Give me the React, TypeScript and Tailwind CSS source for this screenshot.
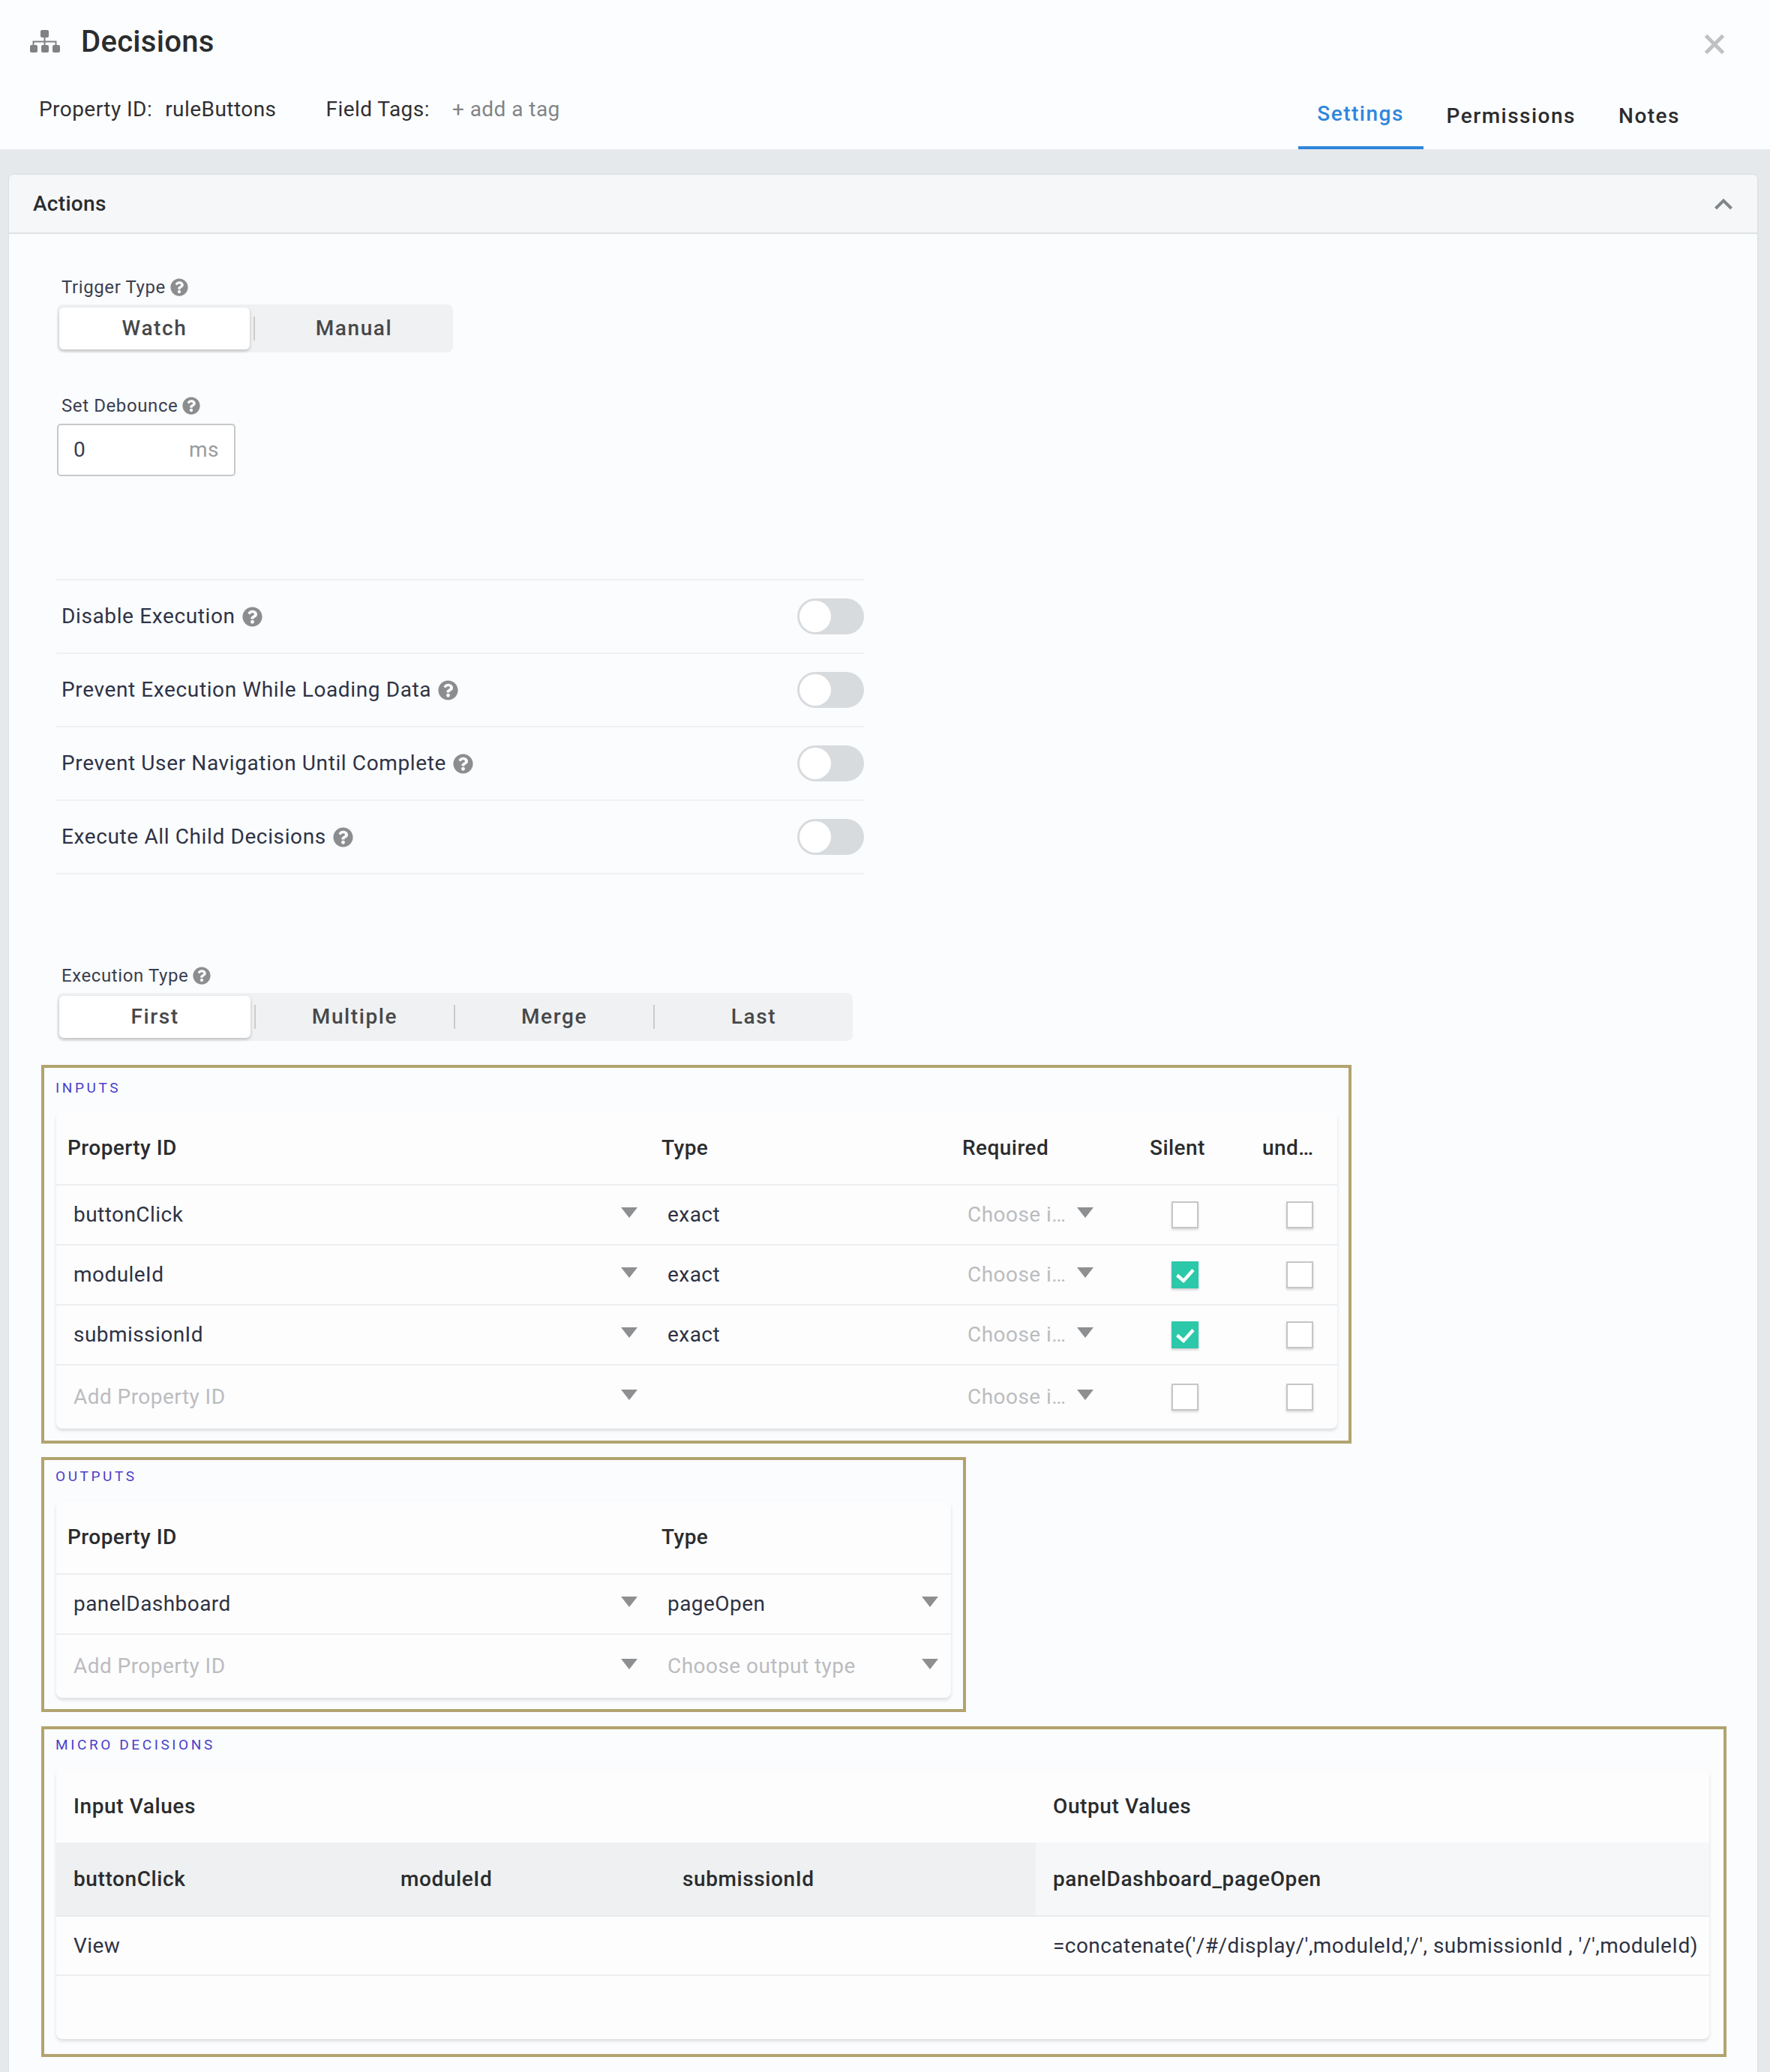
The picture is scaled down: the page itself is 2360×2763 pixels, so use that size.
import { FaQuestionCircle } from 'react-icons/fa';

const font = { fontFamily: 'Roboto, "Liberation Sans", sans-serif' };

function Help({ size = 24 }: { size?: number }) {
  return <FaQuestionCircle size={size} color="#8c8d8f" className="shrink-0" />;
}

function Caret() {
  return (
    <svg width="22" height="14" viewBox="0 0 22 14" className="shrink-0 -mt-[6px]">
      <polygon points="0,0 22,0 11,14" fill="#8e8f91" />
    </svg>
  );
}

function Segmented({ items, width }: { items: string[]; width: string }) {
  return (
    <div className={`ml-[21px] flex h-[64px] items-center rounded-[8px] bg-[#eff1f2] pl-[3px] text-[28px] font-medium tracking-[1.6px] text-[#47484a] ${width}`}>
      <div className="flex h-[56px] w-[256px] items-center justify-center rounded-[6px] bg-white shadow-[0_2px_4px_rgba(0,0,0,0.22)]">
        {items[0]}
      </div>
      <div className="ml-[5px] h-[32px] w-[2px] bg-[#c9cbcd]" />
      {items.slice(1).map((item, i) => (
        <div key={item} className="flex items-center">
          {i > 0 && <div className="h-[32px] w-[2px] bg-[#c9cbcd]" />}
          <div className="flex w-[264px] items-center justify-center">{item}</div>
        </div>
      ))}
    </div>
  );
}

function FieldLabel({ text }: { text: string }) {
  return (
    <div className="ml-[27px] flex h-[36px] items-center gap-[6px] text-[24px] tracking-[0.6px] text-[#3a3e50]">
      {text}
      <Help />
    </div>
  );
}

function ToggleRow({ label }: { label: string }) {
  return (
    <div className="flex h-[98px] items-center justify-between border-b-2 border-[#eff1f3]">
      <div className="ml-[7px] flex items-center gap-[9px] text-[28px] tracking-[0.62px] text-[#2f3346]">
        {label}
        <Help size={27} />
      </div>
      <div className="flex h-[48px] w-[89px] items-center rounded-full bg-[#d8dbde] pl-[3px]">
        <div className="h-[42px] w-[42px] rounded-full bg-white" />
      </div>
    </div>
  );
}

function Checkbox({ checked, offset }: { checked?: boolean; offset: string }) {
  if (checked) {
    return (
      <div className={`h-[36px] w-[36px] bg-[#2bc8a9] shadow-[0_2px_3px_rgba(0,0,0,0.2)] ${offset}`}>
        <svg width="36" height="36" viewBox="0 0 36 36" fill="none">
          <path d="M7.5 18.5 L16 26 L29 11.5" stroke="white" strokeWidth="4.4" />
        </svg>
      </div>
    );
  }
  return <div className={`h-[36px] w-[36px] border-2 border-[#c4c6c8] bg-white shadow-[0_2px_3px_rgba(0,0,0,0.15)] ${offset}`} />;
}

const inputRows = [
  { id: 'buttonClick', type: 'exact', silent: false },
  { id: 'moduleId', type: 'exact', silent: true },
  { id: 'submissionId', type: 'exact', silent: true },
];

function InputCells({ id, type, silent, placeholder }: { id: string; type: string; silent: boolean; placeholder?: boolean }) {
  return (
    <>
      <div className={`flex items-center justify-between pl-[23px] pr-[17px] ${placeholder ? 'text-[#bbbcbe]' : ''}`}>
        {id}
        <Caret />
      </div>
      <div className="pl-[23px]">{type}</div>
      <div className="flex items-center justify-between pl-[22px] pr-[60px] text-[#bbbcbe]">
        Choose i…
        <Caret />
      </div>
      <div className="flex items-center">
        <Checkbox checked={silent} offset="ml-[44px]" />
      </div>
      <div className="flex items-center">
        <Checkbox offset="ml-[47px]" />
      </div>
    </>
  );
}

export default function App() {
  return (
    <div style={font} className="h-[2763px] w-[2360px] overflow-hidden bg-[#e6e9ec]">
      {/* Header */}
      <div className="flex h-[199px] flex-col bg-[#fcfdfe]">
        <div className="flex h-[112px] items-center pl-[40px] pr-[60px]">
          <svg width="40" height="30" viewBox="0 0 40 30" className="-mt-[2px]">
            <rect x="14" y="0" width="11" height="10" rx="2" fill="#808184" />
            <path d="M19.5 10 V20 M4.5 20 V15.5 H34.5 V20" stroke="#808184" strokeWidth="2" fill="none" />
            <rect x="0" y="20" width="10" height="10" rx="2" fill="#808184" />
            <rect x="15" y="20" width="10" height="10" rx="2" fill="#808184" />
            <rect x="30" y="20" width="10" height="10" rx="2" fill="#808184" />
          </svg>
          <div className="ml-[28px] text-[40px] font-medium tracking-[0.3px] text-[#2b2c2e]">Decisions</div>
          <svg width="28" height="28" viewBox="0 0 28 28" className="ml-auto mt-[6px]">
            <path d="M2.5 2.5 L25.5 25.5 M25.5 2.5 L2.5 25.5" stroke="#bfc1c3" strokeWidth="5" />
          </svg>
        </div>
        <div className="flex h-[87px] items-stretch pl-[52px] pr-[120px] text-[28px] text-[#2f3034]">
          <div className="flex h-[68px] items-center tracking-[0.45px]">
            Property ID:
            <span className="ml-[17px]">ruleButtons</span>
            <span className="ml-[66px]">Field Tags:</span>
            <span className="ml-[30px] text-[#828487]">+ add a tag</span>
          </div>
          <div className="ml-auto flex text-[28px] font-medium tracking-[1.5px]">
            <div className="flex w-[167px] items-center justify-center border-b-4 border-[#2f86dd] pb-[4px] text-[#2f86dd]">Settings</div>
            <div className="ml-[31px] flex items-center pb-[2px] text-[#2b2c2e]">Permissions</div>
            <div className="ml-[57px] flex items-center pb-[2px] text-[#2b2c2e]">Notes</div>
          </div>
        </div>
      </div>

      {/* Card */}
      <div className="ml-[12px] mt-[34px] h-[2530px] w-[2331px] rounded-t-[6px] bg-[#fafcfd] shadow-[0_0_2px_rgba(0,0,0,0.15)]">
        <div className="flex h-[79px] items-center justify-between rounded-t-[6px] border-b-2 border-[#dfe2e4] bg-[#f5f7f8] pl-[32px] pr-[32px] text-[28px] font-medium tracking-[0.3px] text-[#2b2c2e]">
          Actions
          <svg width="26" height="16" viewBox="0 0 26 16" fill="none">
            <path d="M2.5 14 L13 3.5 L23.5 14" stroke="#808588" strokeWidth="4" />
          </svg>
        </div>

        <div className="pl-[43px] pt-[53px]">
          <FieldLabel text="Trigger Type" />
          <div className="mt-[5px]">
            <Segmented items={['Watch', 'Manual']} width="w-[528px]" />
          </div>

          <div className="mt-[53px]">
            <FieldLabel text="Set Debounce" />
          </div>
          <div className="ml-[21px] mt-[6px] flex h-[70px] w-[238px] items-center justify-between rounded-[5px] border-2 border-[#c6c8ca] bg-white px-[20px] text-[28px] tracking-[0.45px]">
            <span className="text-[#3a3e50]">0</span>
            <span className="text-[#9a9b9e]">ms</span>
          </div>

          <div className="ml-[20px] mt-[137px] w-[1077px] border-t-2 border-[#eff1f3]">
            <ToggleRow label="Disable Execution" />
            <ToggleRow label="Prevent Execution While Loading Data" />
            <ToggleRow label="Prevent User Navigation Until Complete" />
            <ToggleRow label="Execute All Child Decisions" />
          </div>

          <div className="mt-[117px]">
            <FieldLabel text="Execution Type" />
          </div>
          <div className="mt-[5px]">
            <Segmented items={['First', 'Multiple', 'Merge', 'Last']} width="w-[1061px]" />
          </div>

          {/* Inputs */}
          <div className="mt-[32px] w-[1747px] border-4 border-[#b2a36f] pb-[16px] pl-[16px]">
            <div className="-ml-[1px] h-[59px] pt-[14px] text-[19px] leading-[26px] tracking-[3.6px] text-[#4a3fc9]">INPUTS</div>
            <div className="w-[1708px] rounded-[8px] bg-[#fdfdfe] text-[28px] tracking-[0.45px] text-[#2e3243] shadow-[0_3px_4px_rgba(0,0,0,0.12)]">
              <div className="grid h-[98px] grid-cols-[792px_401px_250px_150px_115px] items-center border-b-2 border-[#eceef0] font-medium text-[#2b2c2e]">
                <div className="pl-[15px]">Property ID</div>
                <div className="pl-[15px]">Type</div>
                <div className="pl-[15px]">Required</div>
                <div className="pl-[15px]">Silent</div>
                <div className="pl-[15px]">und…</div>
              </div>
              {inputRows.map((row) => (
                <div key={row.id} className="grid h-[80px] grid-cols-[792px_401px_250px_150px_115px] items-center border-b-2 border-[#eceef0]">
                  <InputCells id={row.id} type={row.type} silent={row.silent} />
                </div>
              ))}
              <div className="grid h-[84px] grid-cols-[792px_401px_250px_150px_115px] items-center">
                <InputCells id="Add Property ID" type="" silent={false} placeholder />
              </div>
            </div>
          </div>

          {/* Outputs */}
          <div className="mt-[18px] w-[1233px] border-4 border-[#b2a36f] pb-[15px] pl-[16px]">
            <div className="-ml-[1px] h-[55px] pt-[9px] text-[19px] leading-[26px] tracking-[3.6px] text-[#4a3fc9]">OUTPUTS</div>
            <div className="w-[1193px] rounded-[8px] bg-[#fdfdfe] text-[28px] tracking-[0.45px] text-[#2e3243] shadow-[0_3px_4px_rgba(0,0,0,0.12)]">
              <div className="grid h-[98px] grid-cols-[792px_401px] items-center border-b-2 border-[#eceef0] font-medium text-[#2b2c2e]">
                <div className="pl-[15px]">Property ID</div>
                <div className="pl-[15px]">Type</div>
              </div>
              <div className="grid h-[80px] grid-cols-[792px_401px] items-center border-b-2 border-[#eceef0]">
                <div className="flex items-center justify-between pl-[23px] pr-[17px]">panelDashboard<Caret /></div>
                <div className="flex items-center justify-between pl-[23px] pr-[17px]">pageOpen<Caret /></div>
              </div>
              <div className="grid h-[84px] grid-cols-[792px_401px] items-center text-[#bbbcbe]">
                <div className="flex items-center justify-between pl-[23px] pr-[17px]">Add Property ID<Caret /></div>
                <div className="flex items-center justify-between pl-[23px] pr-[17px]">Choose output type<Caret /></div>
              </div>
            </div>
          </div>

          {/* Micro decisions */}
          <div className="mt-[19px] w-[2247px] border-4 border-[#b2a36f] pb-[20px] pl-[16px]">
            <div className="-ml-[1px] h-[54px] pt-[8px] text-[19px] leading-[26px] tracking-[3.6px] text-[#4a3fc9]">MICRO DECISIONS</div>
            <div className="w-[2204px] rounded-[8px] bg-[#fdfdfe] text-[28px] tracking-[0.45px] text-[#2e3243] shadow-[0_3px_4px_rgba(0,0,0,0.12)]">
              <div className="grid h-[97px] grid-cols-[1306px_898px] items-center font-medium tracking-[0.6px] text-[#2b2c2e]">
                <div className="pl-[23px]">Input Values</div>
                <div className="pl-[23px]">Output Values</div>
              </div>
              <div className="grid h-[99px] grid-cols-[1306px_898px] border-b-2 border-[#e8eaeb] font-medium tracking-[0.6px] text-[#2b2c2e]">
                <div className="flex items-center bg-[#eef0f1] pl-[23px]">
                  <div className="w-[436px]">buttonClick</div>
                  <div className="w-[376px]">moduleId</div>
                  <div>submissionId</div>
                </div>
                <div className="flex items-center bg-[#f5f7f8] pl-[23px]">panelDashboard_pageOpen</div>
              </div>
              <div className="grid h-[79px] grid-cols-[1306px_898px] items-center border-b-2 border-[#eceef0]">
                <div className="pl-[23px]">View</div>
                <div className="whitespace-nowrap pl-[23px]">=concatenate('/#/display/',moduleId,'/', submissionId , '/',moduleId)</div>
              </div>
              <div className="h-[84px]" />
            </div>
          </div>
        </div>
      </div>
    </div>
  );
}
